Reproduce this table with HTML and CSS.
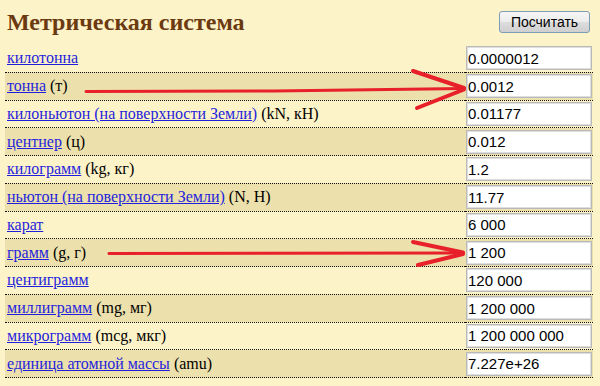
FILE: index.html
```html
<!DOCTYPE html>
<html lang="en">
<head>
<meta charset="utf-8">
<link rel="stylesheet" href="styles.css">
</head>
<body>
<div class="header">
  <h2 class="title">Метрическая система</h2>
  <button class="calc" type="button">Посчитать</button>
</div>
<table class="units">
  <tr><td class="name"><a href="#">килотонна</a></td><td class="val"><input class="num" value="0.0000012"></td></tr>
  <tr><td class="name"><a href="#">тонна</a> (т)</td><td class="val"><input class="num" value="0.0012"></td></tr>
  <tr><td class="name"><a href="#">килоньютон (на поверхности Земли)</a> (kN, кН)</td><td class="val"><input class="num" value="0.01177"></td></tr>
  <tr><td class="name"><a href="#">центнер</a> (ц)</td><td class="val"><input class="num" value="0.012"></td></tr>
  <tr><td class="name"><a href="#">килограмм</a> (kg, кг)</td><td class="val"><input class="num" value="1.2"></td></tr>
  <tr><td class="name"><a href="#">ньютон (на поверхности Земли)</a> (N, Н)</td><td class="val"><input class="num" value="11.77"></td></tr>
  <tr><td class="name"><a href="#">карат</a></td><td class="val"><input class="num" value="6 000"></td></tr>
  <tr><td class="name"><a href="#">грамм</a> (g, г)</td><td class="val"><input class="num" value="1 200"></td></tr>
  <tr><td class="name"><a href="#">центиграмм</a></td><td class="val"><input class="num" value="120 000"></td></tr>
  <tr><td class="name"><a href="#">миллиграмм</a> (mg, мг)</td><td class="val"><input class="num" value="1 200 000"></td></tr>
  <tr><td class="name"><a href="#">микрограмм</a> (mcg, мкг)</td><td class="val"><input class="num" value="1 200 000 000"></td></tr>
  <tr><td class="name"><a href="#">единица атомной массы</a> (amu)</td><td class="val"><input class="num" value="7.227e+26"></td></tr>
</table>
<svg class="arrows" width="600" height="386" viewBox="0 0 600 386" aria-hidden="true">
  <g fill="none" stroke="#e8202a" stroke-linecap="round" stroke-linejoin="round">
    <path d="M86 91.5 L274 91 L464 88.5" stroke-width="3"/>
    <path d="M413 71 L464 88" stroke-width="4"/>
    <path d="M417 108 L464 89.5" stroke-width="4"/>
    <path d="M109 253.5 L463 253" stroke-width="3"/>
    <path d="M413 242 L463 252.5" stroke-width="4"/>
    <path d="M418 265 L463 254" stroke-width="4"/>
  </g>
</svg>
</body>
</html>
```
FILE: styles.css
```css
body {
  margin: 0;
  padding: 0 7px 0 5px;
  background: #fdf3c8;
  font-family: "Liberation Serif", serif;
  font-size: 16px;
}
.header {
  display: flex;
  justify-content: space-between;
  align-items: center;
  height: 45px;
}
.title {
  margin: 0 0 0 2px;
  font-family: "Liberation Serif", serif;
  font-size: 24px;
  font-weight: bold;
  color: #6b3a10;
}
.calc {
  width: 91px;
  height: 22px;
  margin: 0 3px 2px 0;
  padding: 0;
  font-family: "Liberation Sans", sans-serif;
  font-size: 14px;
  color: #000;
  border: 1px solid #7d9cb8;
  border-radius: 3px;
  background: linear-gradient(#f6f6f6 0%, #ececec 48%, #dddddd 52%, #cfcfcf 100%);
}
.units {
  width: 588px;
  border-collapse: collapse;
}
.units td {
  height: 26.75px;
  padding: 0;
  border-bottom: 1px dotted #111;
  vertical-align: middle;
}
.units tr:nth-child(odd) td {
  background: #fdf3c8;
}
.units tr:nth-child(even) td {
  background: #ece1ac;
}
.units td.name {
  padding-left: 2px;
  font-family: "Liberation Serif", serif;
  font-size: 16px;
}
.name a {
  color: #1f1fdd;
}
.val {
  width: 128px;
}
.num {
  display: block;
  box-sizing: border-box;
  width: 126px;
  height: 24px;
  margin: 0 1px 0 auto;
  padding: 0 0 0 1px;
  font-family: "Liberation Sans", sans-serif;
  font-size: 15px;
  color: #000;
  background: #fff;
  border: 1px solid #b9b9b9;
  box-shadow: inset 0 0 0 1px #dedede;
}
.arrows {
  position: absolute;
  left: 0;
  top: 0;
  pointer-events: none;
}
```
